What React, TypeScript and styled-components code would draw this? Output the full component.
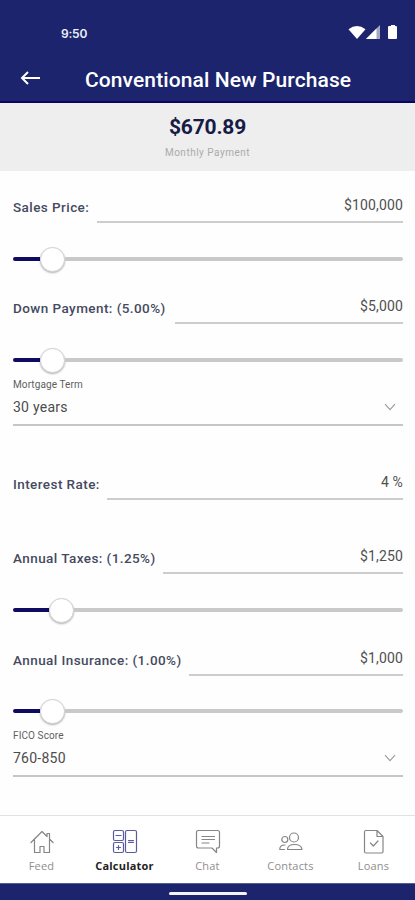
import React from "react";
import styled, { createGlobalStyle } from "styled-components";

const GlobalStyle = createGlobalStyle`
  * { box-sizing: border-box; }
  body { margin: 0; background: #fff; font-family: Roboto, "Liberation Sans", sans-serif; }
`;

const Screen = styled.div`
  display: flex;
  flex-direction: column;
  width: 415px;
  height: 900px;
  overflow: hidden;
  background: #fefefe;
`;

const Header = styled.header`
  height: 103px;
  background: #1b246d;
  border-bottom: 2px solid #0a0560;
  color: #fff;
`;

const StatusBar = styled.div`
  display: flex;
  align-items: center;
  justify-content: space-between;
  height: 56px;
  padding: 9px 17px 0 61px;
`;

const Clock = styled.span`
  padding-top: 2px;
  font: 600 12px/16px Inter, sans-serif;
  letter-spacing: -0.2px;
  color: #eceefa;
`;

const StatusIcons = styled.svg`
  width: 50px;
  height: 18px;
`;

const TitleBar = styled.div`
  display: flex;
  align-items: center;
  height: 45px;
  padding-left: 20px;
`;

const BackIcon = styled.svg`
  width: 22px;
  height: 18px;
  margin: 0 43px 1px 0;
`;

const Title = styled.h1`
  margin: 0;
  padding-top: 2px;
  font-size: 21px;
  line-height: 26px;
  font-weight: 500;
  letter-spacing: 0.1px;
  white-space: nowrap;
`;

const Summary = styled.section`
  display: flex;
  flex-direction: column;
  align-items: center;
  height: 68px;
  padding-top: 11px;
  background: #eeeeee;
`;

const Amount = styled.div`
  font: 700 21px/26px Roboto, sans-serif;
  letter-spacing: -0.2px;
  color: #171b45;
`;

const AmountCaption = styled.div`
  margin-top: 5px;
  font-size: 10px;
  line-height: 16px;
  letter-spacing: 0.5px;
  color: #aaaaaa;
`;

const Form = styled.main`
  height: 644px;
  padding: 14px 12px 0 13px;
`;

const Field = styled.div<{ $top?: number }>`
  display: flex;
  height: 38px;
  margin-top: ${(p) => p.$top ?? 0}px;
`;

const FieldLabel = styled.label<{ $width: number }>`
  flex: none;
  width: ${(p) => p.$width}px;
  padding-top: 12px;
  font-size: 13.5px;
  line-height: 20px;
  font-weight: 500;
  letter-spacing: 0.43px;
  white-space: nowrap;
  color: #454a60;
`;

const FieldValue = styled.div`
  flex: 1;
  padding-top: 10px;
  border-bottom: 2px solid #cdcdcd;
  font-size: 14px;
  line-height: 20px;
  letter-spacing: 0.15px;
  text-align: right;
  color: #505050;
`;

const Slider = styled.div<{ $top: number }>`
  display: flex;
  align-items: center;
  height: 26px;
  margin-top: ${(p) => p.$top}px;
`;

const Filled = styled.div<{ $width: number }>`
  width: ${(p) => p.$width}px;
  height: 4px;
  border-radius: 2px 0 0 2px;
  background: #100a62;
`;

const Knob = styled.div`
  width: 25px;
  height: 25px;
  border-radius: 50%;
  border: 1px solid #d2d2d2;
  background: #fff;
  box-shadow: 0 1px 2px rgba(0, 0, 0, 0.3);
`;

const Rest = styled.div`
  flex: 1;
  height: 4px;
  border-radius: 0 2px 2px 0;
  background: #c9c9c9;
`;

const Select = styled.div`
  height: 53px;
  border-bottom: 2px solid #c6c6c6;
`;

const SelectCaption = styled.div`
  padding-top: 5px;
  font-size: 10px;
  line-height: 14px;
  letter-spacing: 0.1px;
  color: #5e5e5e;
`;

const SelectRow = styled.div`
  display: flex;
  align-items: center;
  justify-content: space-between;
  height: 20px;
  margin-top: 5px;
  padding-right: 7px;
  font-size: 14px;
  letter-spacing: 0.25px;
  color: #4c4c4c;
`;

const Chevron = styled.svg`
  width: 12px;
  height: 8px;
`;

const TabBar = styled.nav`
  display: grid;
  grid-template-columns: repeat(5, 1fr);
  height: 68px;
  border-top: 1px solid #e2e2e2;
  background: #fff;
`;

const Tab = styled.div`
  display: flex;
  flex-direction: column;
  align-items: center;
  padding-top: 12px;
`;

const TabIcon = styled.svg<{ $active?: boolean }>`
  width: 28px;
  height: 28px;
  fill: none;
  stroke: ${(p) => (p.$active ? "#5c5c9c" : "#858585")};
  stroke-width: 1.2;
  stroke-linecap: round;
  stroke-linejoin: round;
`;

const TabText = styled.span<{ $active?: boolean }>`
  margin-top: 2px;
  font: ${(p) => (p.$active ? 700 : 400)} 11px/16px "Open Sans", sans-serif;
  letter-spacing: 0.2px;
  white-space: nowrap;
  color: ${(p) => (p.$active ? "#222222" : "#8e8e8e")};
`;

const SystemBar = styled.footer`
  display: flex;
  justify-content: center;
  height: 17px;
  padding-top: 8px;
  background: #1b246d;
  border-top: 1px solid #565c98;
`;

const HomeHandle = styled.div`
  width: 78px;
  height: 3px;
  border-radius: 2px;
  background: #f4f4fb;
`;

interface AmountFieldProps {
  label: string;
  value: string;
  width: number;
  top?: number;
}

function AmountField({ label, value, width, top }: AmountFieldProps) {
  return (
    <Field $top={top}>
      <FieldLabel $width={width}>{label}</FieldLabel>
      <FieldValue>{value}</FieldValue>
    </Field>
  );
}

function RangeSlider({ filled, top }: { filled: number; top: number }) {
  return (
    <Slider $top={top}>
      <Filled $width={filled} />
      <Knob />
      <Rest />
    </Slider>
  );
}

function SelectField({ caption, value }: { caption: string; value: string }) {
  return (
    <Select>
      <SelectCaption>{caption}</SelectCaption>
      <SelectRow>
        {value}
        <Chevron viewBox="0 0 12 8" fill="none" stroke="#9a9a9a" strokeWidth="1.1">
          <path d="M1 1.2 6 6.6 11 1.2" />
        </Chevron>
      </SelectRow>
    </Select>
  );
}

const tabs = [
  {
    name: "Feed",
    icon: <path d="M3 14.5 14 3.5l3.500 3.500 1.500 1.500V5.500h2.500v5.500L25 14.500M6.500 12v12.500h5.500v-6h4v6h5.500V12" />,
  },
  {
    name: "Calculator",
    active: true,
    icon: (
      <>
        <rect x="2.500" y="2.500" width="10" height="10" rx="1.500" />
        <rect x="2.500" y="14.500" width="10" height="10" rx="1.500" />
        <rect x="14.500" y="2.500" width="11" height="22" rx="1.500" />
        <path d="M5 7.500h5M5.500 19.500h4M7.500 17.500v4M17.500 12.500h5M17.500 14.300h5" />
      </>
    ),
  },
  {
    name: "Chat",
    icon: (
      <>
        <path d="M4.500 2.500h19q2 0 2 2V18q0 2-2 2h-1v4.500L18 20H4.500q-2 0-2-2V4.500q0-2 2-2Z" />
        <path d="M8 8.500h12.500M8 11.500h12.500M8 15h7" />
      </>
    ),
  },
  {
    name: "Contacts",
    icon: (
      <>
        <circle cx="17" cy="9.500" r="4.500" />
        <circle cx="7.800" cy="11.500" r="3" />
        <path d="M10.500 21.500q0-5 7-5t7.500 5ZM7.500 21.500H2.800q-.3-4.500 5.200-4.500" />
      </>
    ),
  },
  {
    name: "Loans",
    icon: (
      <>
        <path d="M6 2.500h11l6 6v15q0 1.500-1.500 1.500H6q-1.500 0-1.500-1.500V4q0-1.500 1.500-1.500ZM17 2.500v6h6" />
        <path d="m10.500 15 2.800 3 4.700-5" />
      </>
    ),
  },
];

export default function App() {
  return (
    <Screen>
      <GlobalStyle />
      <Header>
        <StatusBar>
          <Clock>9:50</Clock>
          <StatusIcons viewBox="0 0 50 18" fill="#fff">
            <path d="M.5 5.300Q9 -1.300 17.500 5.300L9 15Z" />
            <path d="M32 1v14H18Z" opacity=".6" />
            <path d="M28.500 4.500V15H18Z" />
            <path d="M41 2h2V1h4v1h1q1 0 1 1v11q0 1-1 1h-7q-1 0-1-1V3q0-1 1-1Z" />
          </StatusIcons>
        </StatusBar>
        <TitleBar>
          <BackIcon viewBox="0 0 22 18" fill="none" stroke="#fff" strokeWidth="2">
            <path d="M20 9H2M8 3 2 9l6 6" />
          </BackIcon>
          <Title>Conventional New Purchase</Title>
        </TitleBar>
      </Header>
      <Summary>
        <Amount>$670.89</Amount>
        <AmountCaption>Monthly Payment</AmountCaption>
      </Summary>
      <Form>
        <AmountField label="Sales Price:" value="$100,000" width={84} />
        <RangeSlider filled={27} top={23} />
        <AmountField label="Down Payment: (5.00%)" value="$5,000" width={162} top={14} />
        <RangeSlider filled={27} top={23} />
        <SelectField caption="Mortgage Term" value="30 years" />
        <AmountField label="Interest Rate:" value="4 %" width={94} top={36} />
        <AmountField label="Annual Taxes: (1.25%)" value="$1,250" width={150} top={36} />
        <RangeSlider filled={36} top={23} />
        <AmountField label="Annual Insurance: (1.00%)" value="$1,000" width={176} top={15} />
        <RangeSlider filled={27} top={22} />
        <SelectField caption="FICO Score" value="760-850" />
      </Form>
      <TabBar>
        {tabs.map((tab) => (
          <Tab key={tab.name}>
            <TabIcon viewBox="0 0 28 28" $active={tab.active}>{tab.icon}</TabIcon>
            <TabText $active={tab.active}>{tab.name}</TabText>
          </Tab>
        ))}
      </TabBar>
      <SystemBar>
        <HomeHandle />
      </SystemBar>
    </Screen>
  );
}
